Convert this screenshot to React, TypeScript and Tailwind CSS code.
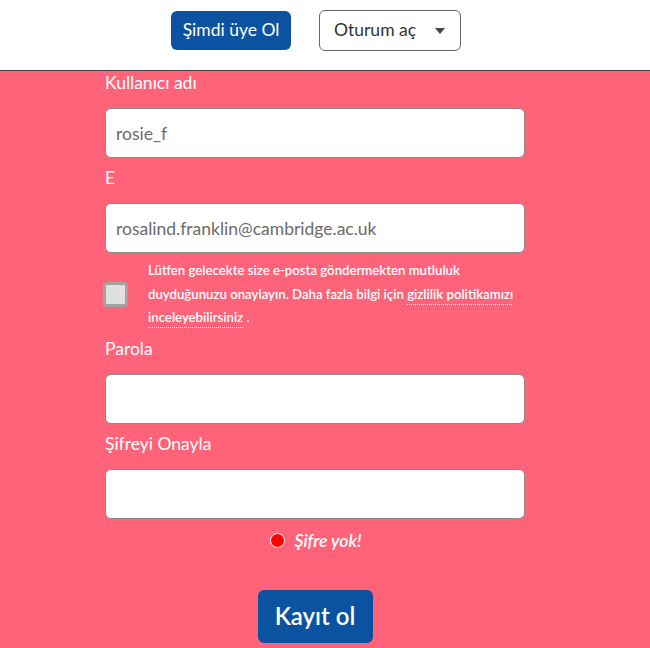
import { useState } from 'react'

function Field({ label, value }: { label: string; value?: string }) {
  return (
    <div className="flex flex-col">
      <label className="h-6 leading-6 text-[17.5px] text-white">{label}</label>
      <input
        type="text"
        defaultValue={value}
        className="mt-[13px] h-[50px] w-full rounded-[6px] border border-[#8a8a8a] bg-white px-[10px] text-[17.5px] text-[#6b6b6b] outline-none"
      />
    </div>
  )
}

export default function App() {
  const [agree, setAgree] = useState(false)

  return (
    <div className="h-[648px] w-[650px] bg-[#ff6379] font-['Lato',sans-serif]">
      <header className="flex h-[71px] justify-center gap-7 border-b border-[#444] bg-white pr-[18px] pt-[10px]">
        <button className="mt-px h-[39px] w-[120px] rounded-[6px] bg-[#0b52a0] text-[17.5px] text-white">
          Şimdi üye Ol
        </button>
        <button className="flex h-[41px] w-[142px] items-center justify-between rounded-[6px] border border-[#666] bg-white pl-[14px] pr-[15px] text-[17.5px] text-[#333]">
          <span>Oturum aç</span>
          <span className="h-0 w-0 border-x-[5px] border-t-[6px] border-x-transparent border-t-[#444]" />
        </button>
      </header>

      <form className="ml-[105px] flex w-[420px] flex-col" onSubmit={(e) => e.preventDefault()}>
        <Field label="Kullanıcı adı" value="rosie_f" />
        <div className="mt-2">
          <Field label="E" value="rosalind.franklin@cambridge.ac.uk" />
        </div>

        <div className="mt-[6px] flex items-center">
          <button
            type="button"
            onClick={() => setAgree(!agree)}
            className="ml-[-2px] h-[25px] w-[25px] shrink-0 rounded-[4px] border-[3px] border-[#a3a3a3] bg-[#e0e0e0]"
          >
            {agree ? '✓' : ''}
          </button>
          <p className="ml-[20px] text-[13.2px] font-semibold leading-[23.5px] text-white">
            Lütfen gelecekte size e-posta göndermekten mutluluk duyduğunuzu onaylayın. Daha fazla bilgi için{' '}
            <a className="underline decoration-dotted decoration-1 underline-offset-[5px]">gizlilik politikamızı inceleyebilirsiniz</a> .
          </p>
        </div>

        <div className="mt-[7px]">
          <Field label="Parola" />
        </div>
        <div className="mt-2">
          <Field label="Şifreyi Onayla" />
        </div>

        <div className="mt-[9px] flex items-center justify-center gap-[9px] pl-[2px]">
          <span className="h-[15px] w-[15px] rounded-full border border-white bg-[#f00]" />
          <span className="text-[17.5px] italic font-semibold text-white">Şifre yok!</span>
        </div>

        <div className="mt-[36px] flex justify-center">
          <button className="h-[53px] w-[115px] rounded-[6px] bg-[#0b52a0] text-[24px] font-semibold text-white">
            Kayıt ol
          </button>
        </div>
      </form>
    </div>
  )
}
